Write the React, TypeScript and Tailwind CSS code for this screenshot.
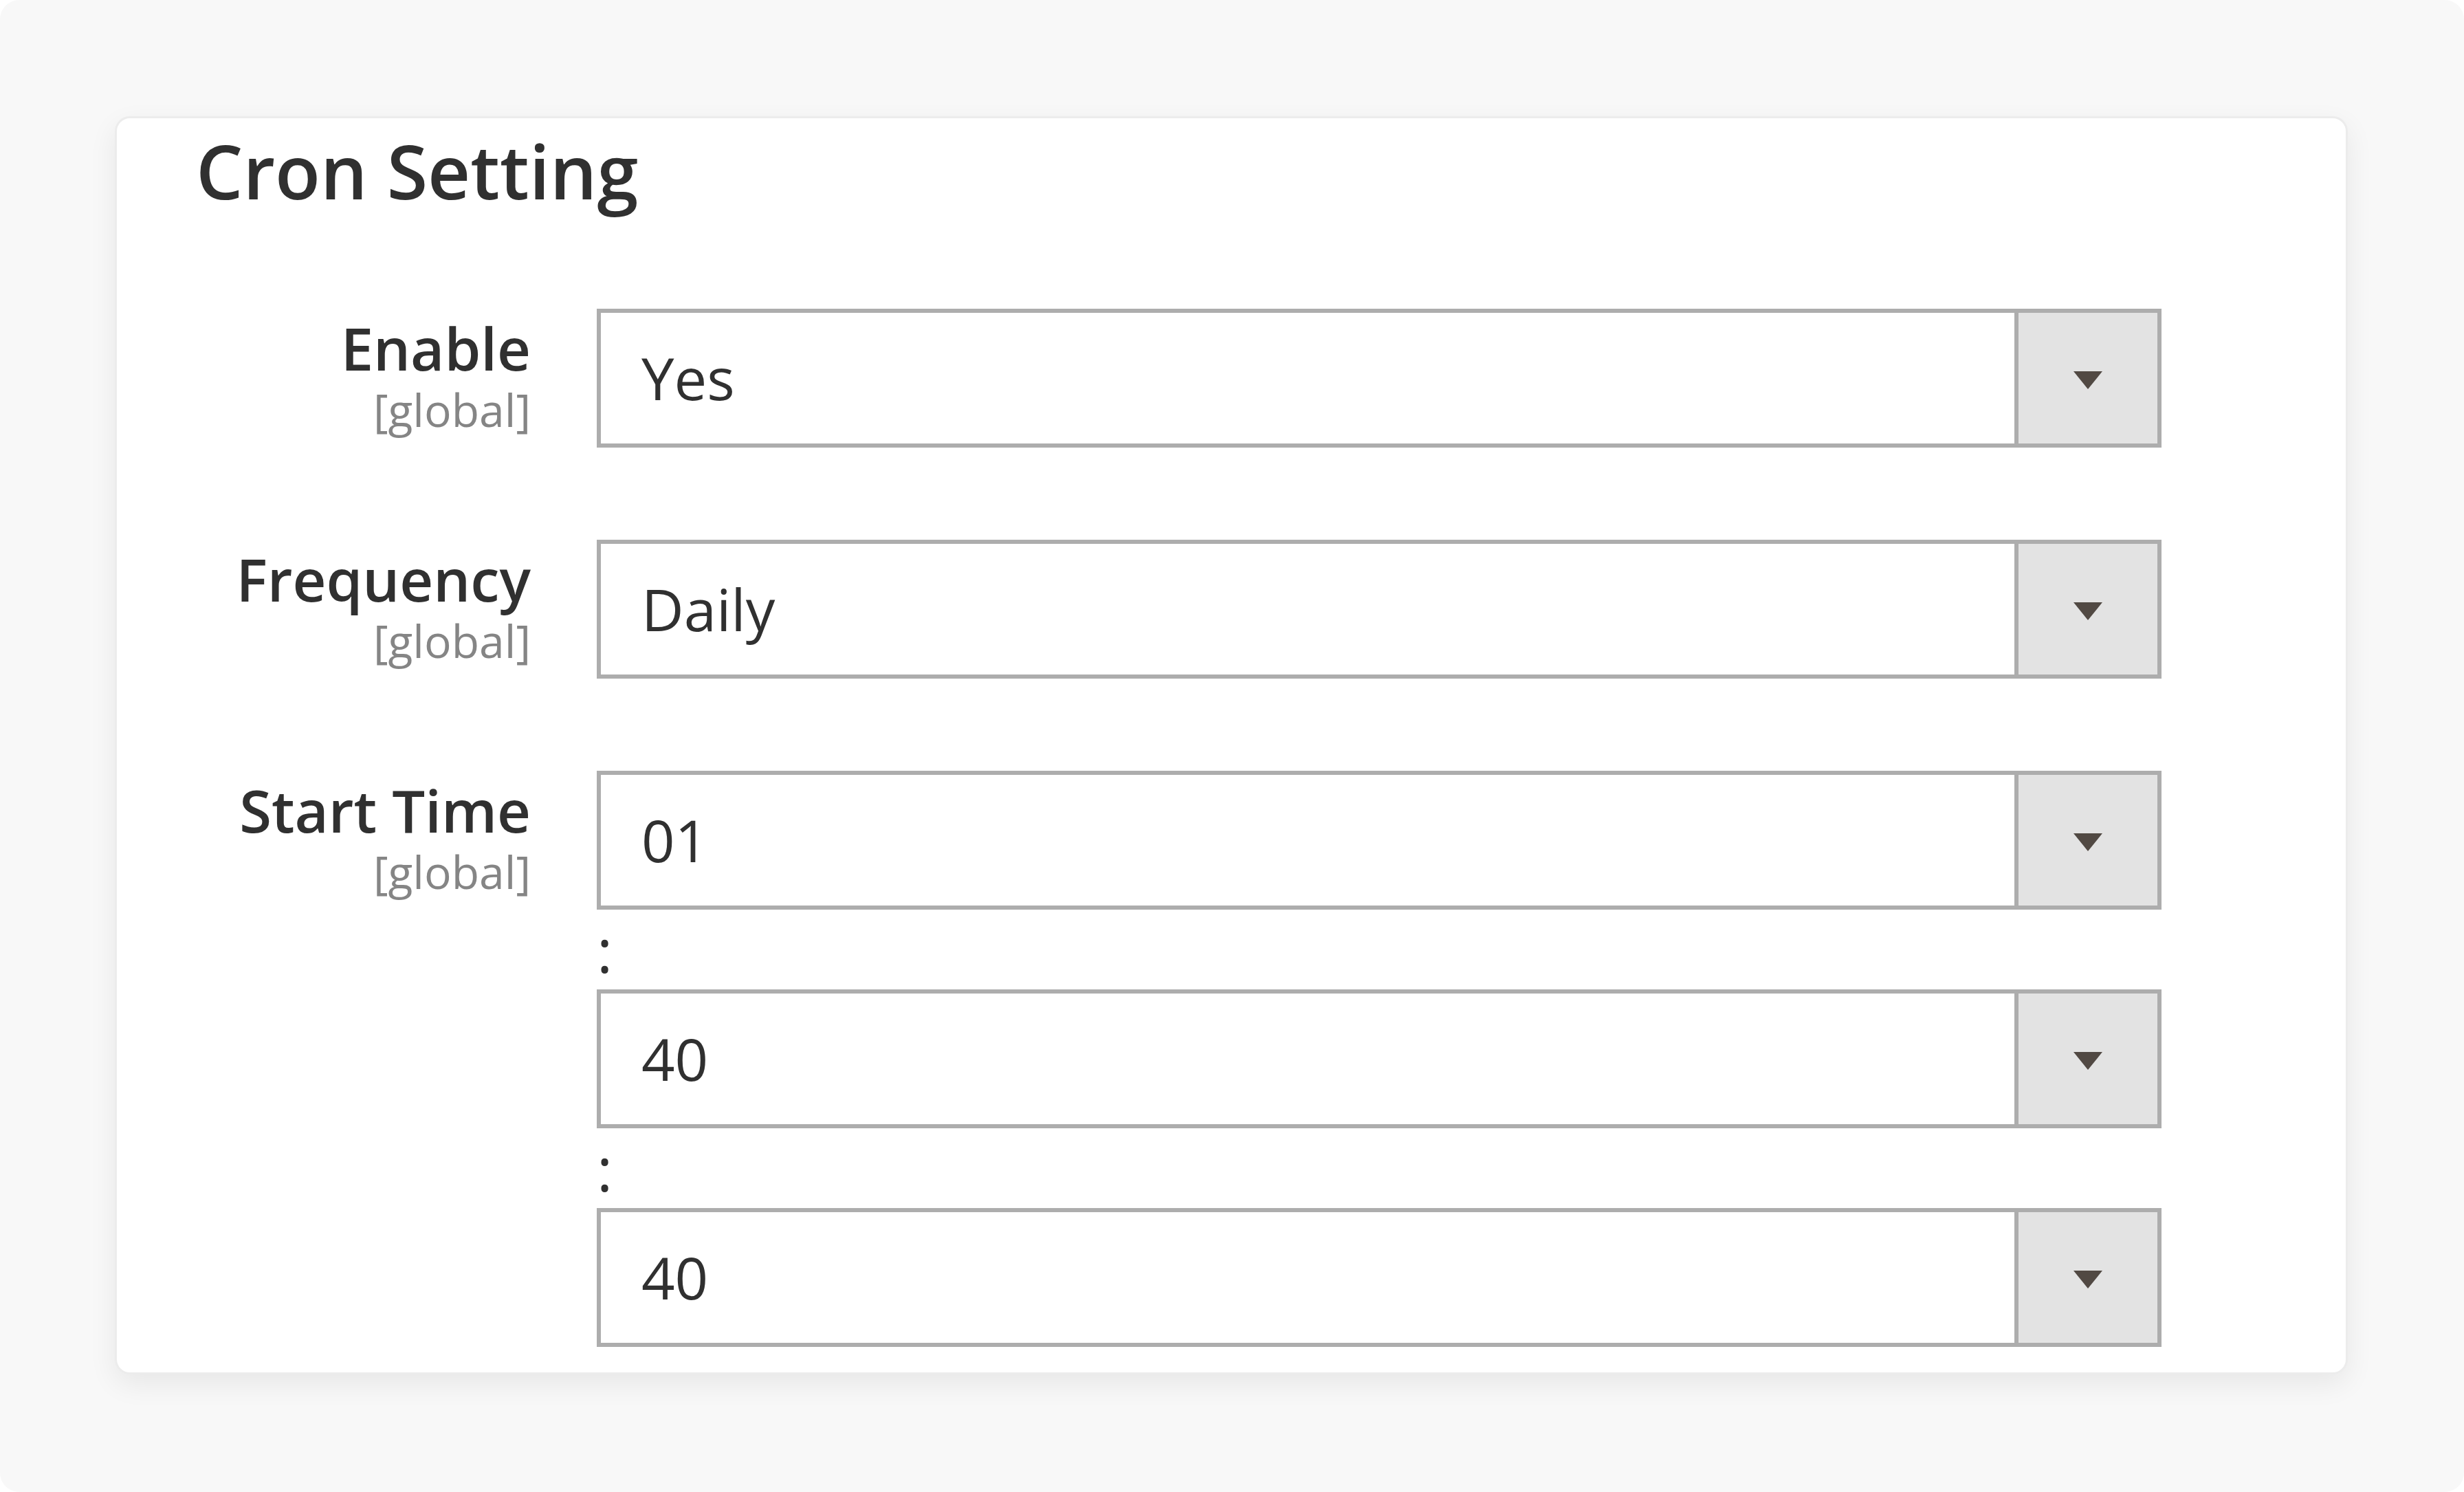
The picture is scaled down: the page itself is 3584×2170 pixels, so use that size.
// Cron Setting panel: labelled select rows, the last one split into
// hour : minute : second pickers.

type Row = { label: string; values: string[] };

const ROWS: Row[] = [
  { label: "Enable", values: ["Yes"] },
  { label: "Frequency", values: ["Daily"] },
  { label: "Start Time", values: ["01", "40", "40"] },
];

function Caret() {
  return (
    <svg width="46" height="30" viewBox="0 0 46 30" className="mt-[6px]">
      <polygon points="2,2 44,2 23,28" fill="#514943" />
    </svg>
  );
}

function FakeSelect({ value }: { value: string }) {
  return (
    <div className="flex h-[202px] w-[2276px] border-[6px] border-[#adadad] bg-white">
      <div className="flex flex-1 items-center pl-[59px] text-[85px] text-[#303030]">
        {value}
      </div>
      <div className="flex w-[208px] items-center justify-center border-l-[6px] border-[#adadad] bg-[#e3e3e3]">
        <Caret />
      </div>
    </div>
  );
}

function SettingRow({ row }: { row: Row }) {
  return (
    <div className="flex items-start gap-[96px] pl-[121px]">
      <div className="flex w-[481px] flex-col items-end pt-[8px] text-right">
        <span className="text-[85px] font-semibold leading-[98px] text-[#303030]">
          {row.label}
        </span>
        <span className="text-[66px] leading-[80px] text-[#858585]">[global]</span>
      </div>
      <div className="flex flex-col">
        {row.values.map((v, i) => (
          <div key={i} className="flex flex-col">
            {i > 0 && (
              <div className="h-[116px] text-[88px] leading-[116px] text-[#303030]">:</div>
            )}
            <FakeSelect value={v} />
          </div>
        ))}
      </div>
    </div>
  );
}

export default function App() {
  return (
    <div className="min-h-screen bg-white font-['Open_Sans',sans-serif]">
      <div className="h-[2170px] w-[3584px] rounded-[28px] bg-[#f8f8f8] pl-[167px] pt-[169px]">
        <div className="w-[3248px] rounded-[22px] border-[3px] border-[#ececec] bg-white pb-[37px] pt-[13px] shadow-[0_14px_40px_rgba(0,0,0,0.07)]">
          <h1 className="pl-[115px] text-[108px] font-semibold leading-[127px] text-[#303030]">
            Cron Setting
          </h1>
          <div className="mt-[137px] flex flex-col gap-[134px]">
            {ROWS.map((r) => (
              <SettingRow key={r.label} row={r} />
            ))}
          </div>
        </div>
      </div>
    </div>
  );
}
